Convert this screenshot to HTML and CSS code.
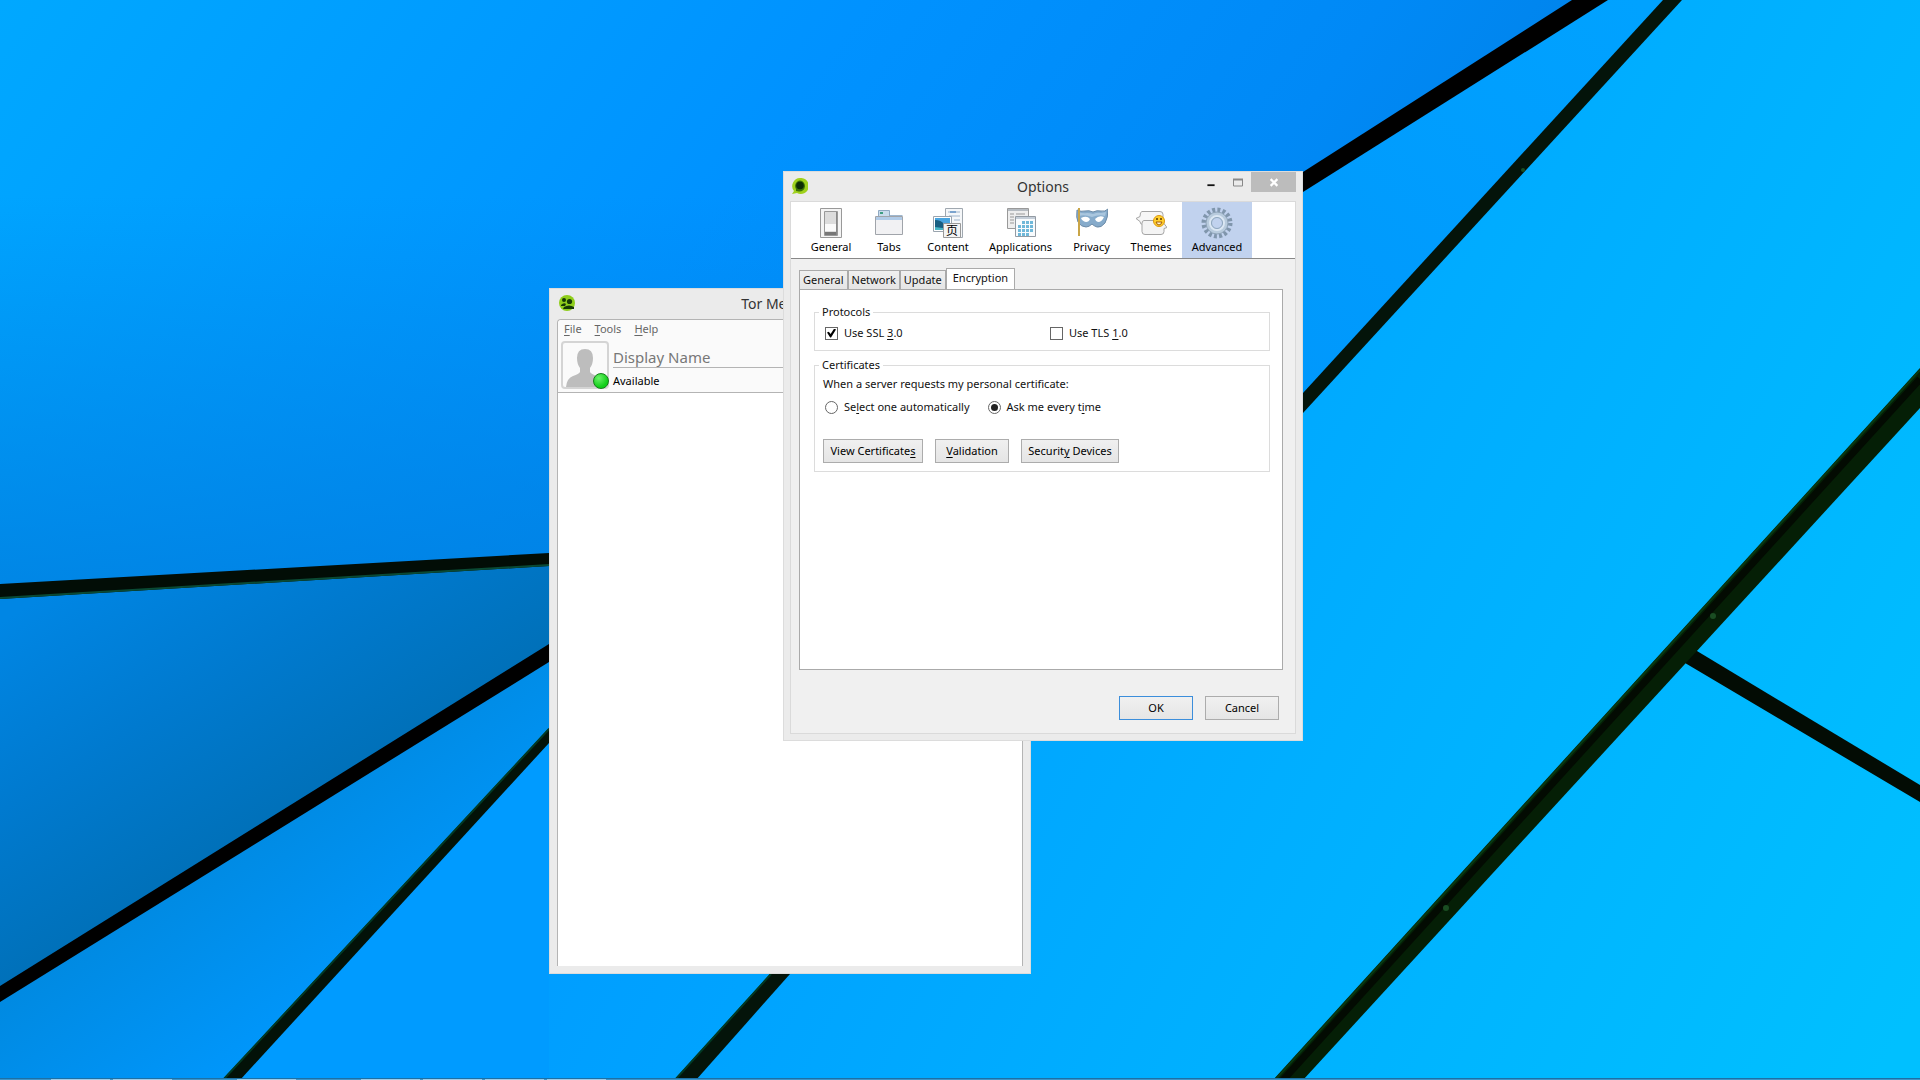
FILE: index.html
```html
<!DOCTYPE html>
<html lang="en">
<head>
<meta charset="utf-8">
<title>Desktop</title>
<link rel="stylesheet" href="styles.css">
</head>
<body class="desktop">
<svg class="wallpaper" viewBox="0 0 1920 1080" preserveAspectRatio="none" aria-hidden="true">
  <defs>
    <linearGradient id="sky" x1="0" y1="0" x2="1" y2="0.3">
      <stop offset="0" stop-color="#00a8ff"/><stop offset="0.5" stop-color="#0092ff"/><stop offset="0.8" stop-color="#0089f6"/><stop offset="1" stop-color="#0082e6"/>
    </linearGradient>
    <linearGradient id="skyshade" x1="0" y1="0" x2="0" y2="1">
      <stop offset="0.3" stop-color="#007edc" stop-opacity="0"/><stop offset="1" stop-color="#007edc" stop-opacity="0.85"/>
    </linearGradient>
    <linearGradient id="dusk" gradientUnits="userSpaceOnUse" x1="100" y1="560" x2="270" y2="830">
      <stop offset="0" stop-color="#0086e4"/><stop offset="0.5" stop-color="#007acf"/><stop offset="1" stop-color="#0070b8"/>
    </linearGradient>
    <linearGradient id="low" gradientUnits="userSpaceOnUse" x1="200" y1="860" x2="420" y2="1160">
      <stop offset="0" stop-color="#008ae2"/><stop offset="0.5" stop-color="#0096fa"/><stop offset="1" stop-color="#009eff"/>
    </linearGradient>
    <linearGradient id="right" gradientUnits="userSpaceOnUse" x1="600" y1="300" x2="1920" y2="1000">
      <stop offset="0" stop-color="#0096ff"/><stop offset="0.55" stop-color="#00aeff"/><stop offset="1" stop-color="#00c0ff"/>
    </linearGradient>
    <linearGradient id="wedge" gradientUnits="userSpaceOnUse" x1="1640" y1="0" x2="1300" y2="400">
      <stop offset="0" stop-color="#00a2ff"/><stop offset="1" stop-color="#0098fc"/>
    </linearGradient>
  </defs>
  <rect width="1920" height="1080" fill="url(#right)"/>
  <path d="M0 0H1590L549 652V558L0 591Z" fill="url(#sky)"/>
  <path d="M0 0H1590L549 652V558L0 591Z" fill="url(#skyshade)"/>
  <path d="M0 591L549 558V652L0 992Z" fill="url(#dusk)"/>
  <path d="M0 992L549 652V735L230 1080H0Z" fill="url(#low)"/>
  <path d="M549 735V1080H230Z" fill="#009bff"/>
  <path d="M1590 0H1674L1303 405L1180 430V250Z" fill="url(#wedge)"/>
  <path d="M0 584L549 553V566L0 599Z" fill="#020d06"/>
  <path d="M0 598L549 565" stroke="#0a4a34" stroke-width="2"/>
  <path d="M0 986L549 644V662L0 1002Z" fill="#000"/>
  <path d="M549 728V743L240 1080H222Z" fill="#031208"/>
  <path d="M549 729L223 1080" stroke="#023a24" stroke-width="2"/>
  <path d="M770 974H790L696 1080H674Z" fill="#04140a"/>
  <path d="M771 974L675 1080" stroke="#023a24" stroke-width="2"/>
  <path d="M1303 172L1572 0H1608L1303 192Z" fill="#000"/>
  <path d="M1303 393L1663 0H1682L1303 413Z" fill="#04140a"/>
  <path d="M1692 648L1920 785V802L1680 660Z" fill="#030c04"/>
  <path d="M1920 368V408L1303 1080H1273Z" fill="#051f06"/>
  <path d="M1920 379L1283 1080" stroke="#030b02" stroke-width="7"/>
  <path d="M1920 370L1275 1080" stroke="#083a12" stroke-width="2"/>
  <g fill="#1a4d22"><circle cx="1713" cy="616" r="3"/><circle cx="1446" cy="908" r="3"/><circle cx="1523" cy="170" r="2"/></g>
</svg>

<section class="window messenger" aria-label="Tor Messenger">
  <header class="titlebar">
    <svg class="app-icon" viewBox="0 0 16 16"><circle cx="8" cy="8" r="8" fill="#8fce1c"/><g fill="#173a05"><circle cx="5" cy="5" r="2"/><circle cx="10.500" cy="6.500" r="2.600"/><path d="M2 10q3-3 5-1l-1 2H2zM5 12q5-3 10 0v2H4z"/></g></svg>
    <h1 class="title">Tor Messenger</h1>
  </header>
  <div class="buddy-list">
    <nav class="menubar"><button><u>F</u>ile</button><button><u>T</u>ools</button><button><u>H</u>elp</button></nav>
    <div class="account">
      <div class="avatar">
        <svg viewBox="0 0 44 44"><path d="M14 15q0-9 8-9t8 9q0 6-3 10v4q1 2 7 4 5 2 6 11H3q1-9 7-11 6-2 7-4v-4q-3-4-3-10z" fill="#bdbdbd"/></svg>
        <span class="presence"></span>
      </div>
      <div class="identity"><p class="display-name">Display Name</p><p class="status">Available</p></div>
    </div>
    <div class="contacts"></div>
  </div>
</section>

<section class="window options" aria-label="Options">
  <header class="titlebar">
    <svg class="app-icon" viewBox="0 0 16 16"><path d="M8 0a8 8 0 1 1-3 15L0 16 2 13A8 8 0 0 1 8 0z" fill="#9fd11c"/><path d="M8 2.500a5.500 5.500 0 1 1-1 11L4 13V11A5.500 5.500 0 0 1 8 2.500z" fill="#3c7206"/><circle cx="8" cy="7.500" r="3.800" fill="#0e2d04"/></svg>
    <h1 class="title">Options</h1>
    <div class="window-controls">
      <button class="minimize" aria-label="Minimize"><svg viewBox="0 0 8 10"><path d="M0 8h8" stroke="#111" stroke-width="2"/></svg></button>
      <button class="maximize" aria-label="Maximize"><svg viewBox="0 0 10 8"><path d="M.5 1h9v6.500h-9z" fill="none" stroke="#888"/><path d="M0 1h10" stroke="#888" stroke-width="2"/></svg></button>
      <button class="close" aria-label="Close"><svg viewBox="0 0 8 8"><path d="M1 1l6 6M7 1L1 7" stroke="#fff" stroke-width="2"/></svg></button>
    </div>
  </header>
  <div class="dialog">
    <nav class="categories">
      <button class="category cat-general">
        <svg viewBox="0 0 32 32"><path d="M5.500 1.500h21v29h-21z" fill="#f4f4f4" stroke="#999"/><path d="M9.500 4.500h13v24h-13z" fill="#ddd" stroke="#999"/><path d="M10 5h10v12H10z" fill="#dcdcdc"/><path d="M10 17h11v7H10z" fill="#fafafa"/><path d="M10 25h12v3H10z" fill="#777"/><path d="M21 5h1v23h-1z" fill="#888"/></svg>General</button>
      <button class="category cat-tabs">
        <svg viewBox="0 0 32 32"><path d="M5.500 9.500v-6h11v6" fill="#c8dbec" stroke="#8fa9c2"/><path d="M7 6h3" stroke="#3f9d83" stroke-width="2"/><path d="M17 8.500h12.500" stroke="#9fb7ce"/><path d="M2.500 9.500h27v18h-27z" fill="#f1f1f3" stroke="#a0a4aa"/><path d="M3 10h26v3H3z" fill="#b0cbe8"/></svg>Tabs</button>
      <button class="category cat-content">
        <svg viewBox="0 0 32 32"><path d="M13.500 1.500h17v29h-17z" fill="#f5f7f9" stroke="#a0a8b0"/><path d="M16 5h12M17 9h11M22 13h6" stroke="#9fb4cc"/><path d="M18 5h6" stroke="#2e73b8"/><path d="M1.500 9.500h18v15h-18z" fill="#fff" stroke="#9aa4ae"/><path d="M3 11h15v12H3z" fill="#4aa5e0"/><path d="M3 13q6 0 9 4t6 3v3H3z" fill="#195f82"/><path d="M3 20l15 2v1H3z" fill="#46b5c5"/><path d="M11.500 16.500h17v14h-17z" fill="#f4f4f4" stroke="#999"/><text x="20" y="28" class="glyph">页</text></svg>Content</button>
      <button class="category cat-applications">
        <svg viewBox="0 0 32 32"><path d="M2.500 1.500h21v20h-21z" fill="#eee" stroke="#999"/><path d="M3 3h20" stroke="#b5bbc1" stroke-width="2"/><path d="M5 7h4M5 10h4M5 13h4M5 16h4M11 7h9M11 10h9" stroke="#999"/><path d="M10.500 9.500h20v20h-20z" fill="#f8fbfd" stroke="#939ba3"/><path d="M11 11h19" stroke="#c5ced8" stroke-width="2"/><path d="M17 15.500h11M13 19.500h15M13 23.500h15M13 27.500h11" stroke="#6fb8d9" stroke-width="3" stroke-dasharray="3 1"/></svg>Applications</button>
      <button class="category cat-privacy">
        <svg viewBox="0 0 32 32"><path d="M1 3q4 2 8 1 4-1 8 1 4-2 8-1 4 1 7-2 0 9-3 14-4 5-8 4-3-1-5-3-3 3-6 3-5 0-8-5Q0 11 1 3z" fill="#86abcb" stroke="#6c8ba8"/><path d="M2 5q6 2 9 1 3 0 6 1 5-2 8-1l5-1-1 4q-6-2-13 1Q8 7 3 9z" fill="#a9c6de"/><path d="M5 11q6-3 9 1-1 3-4 3-4-1-5-4zM19 12q4-4 9-2-2 5-6 5-2 0-3-3z" fill="#fff"/><path d="M3 1v28" stroke="#c9a547" stroke-width="2"/></svg>Privacy</button>
      <button class="category cat-themes">
        <svg viewBox="0 0 32 32"><path d="M7 4.500h18q3 0 3 3v8q0 2-3 2H8q-3 0-3-3l-4-3 4-2q0-5 2-5z" fill="#f6f6f6" stroke="#a5a5a5"/><path d="M9 13.500h18q2 0 2 3l3 4-3 1v3q0 3-3 3H10q-3 0-3-3v-8q0-3 2-3z" fill="#f4f4f4" stroke="#a5a5a5"/><circle cx="24" cy="14" r="5.500" fill="#ffd02e" stroke="#dd980f"/><circle cx="22" cy="12" r="1" fill="#5b3903"/><circle cx="26" cy="12" r="1" fill="#5b3903"/><path d="M21 15h6q-1 3-3 3t-3-3z" fill="#fff5d3" stroke="#a65c06"/></svg>Themes</button>
      <button class="category cat-advanced selected">
        <svg viewBox="0 0 32 32"><circle cx="16" cy="16" r="13" fill="none" stroke="#8096ac" stroke-width="5" stroke-dasharray="2.900 2.205"/><circle cx="16" cy="16" r="11" fill="#b8cbdd" stroke="#8fa4b9"/><circle cx="16" cy="16" r="7" fill="none" stroke="#dbe7f3" stroke-width="2"/><circle cx="16" cy="16" r="5.500" fill="#c1d2ee" stroke="#8fa7be"/></svg>Advanced</button>
    </nav>
    <div class="pane">
      <div class="tabs" role="tablist"><button role="tab">General</button><button role="tab">Network</button><button role="tab">Update</button><button role="tab" class="active" aria-selected="true">Encryption</button></div>
      <div class="tab-panel" role="tabpanel">
        <fieldset class="group">
          <legend>Protocols</legend>
          <div class="protocols">
            <label><input type="checkbox" checked><span>Use SSL <u>3</u>.0</span></label>
            <label><input type="checkbox"><span>Use TLS <u>1</u>.0</span></label>
          </div>
        </fieldset>
        <fieldset class="group">
          <legend>Certificates</legend>
          <p class="prompt">When a server requests my personal certificate:</p>
          <div class="choices">
            <label><input type="radio" name="cert"><span>Se<u>l</u>ect one automatically</span></label>
            <label><input type="radio" name="cert" checked><span>Ask me every t<u>i</u>me</span></label>
          </div>
          <div class="actions"><button class="btn view">View Certificate<u>s</u></button><button class="btn validation"><u>V</u>alidation</button><button class="btn devices">Securit<u>y</u> Devices</button></div>
        </fieldset>
      </div>
      <footer class="dialog-buttons"><button class="btn default">OK</button><button class="btn">Cancel</button></footer>
    </div>
  </div>
</section>

<div class="taskbar" aria-hidden="true"><i></i><i></i><i class="far"></i><i class="far"></i><i></i><i></i><i></i></div>
</body>
</html>
```
FILE: styles.css
```css
* { box-sizing: border-box; }

body, h1, p { margin: 0; }

button {
  margin: 0;
  padding: 0;
  border: 0;
  background: none;
  color: inherit;
  font: inherit;
}

u { text-underline-offset: 2px; }

.desktop {
  position: relative;
  min-height: 100vh;
  overflow: hidden;
  background: #00a4ff;
  color: #111;
  font: 11px/16px "Segoe UI", "Noto Sans", "Open Sans", sans-serif;
}

.wallpaper {
  position: absolute;
  inset: 0;
  width: 100%;
  height: 100%;
}

/* Windows */
.window {
  position: absolute;
  display: flex;
  flex-direction: column;
  border: 1px solid #dcdcdc;
  background: #ebebeb;
}

.messenger { left: 549px; top: 288px; width: 482px; height: 686px; padding: 0 7px 7px; }
.options { left: 783px; top: 171px; width: 520px; height: 570px; padding: 0 6px 6px; }

.titlebar {
  position: relative;
  display: flex;
  align-items: center;
  justify-content: center;
  height: 30px;
}

.options .titlebar { height: 29px; }

.title {
  color: #333;
  font-size: 14px;
  font-weight: 400;
  line-height: 20px;
}

.app-icon {
  position: absolute;
  left: 2px;
  top: 6px;
  width: 16px;
  height: 16px;
}

.window-controls {
  position: absolute;
  right: 0;
  top: 0;
  display: flex;
}

.window-controls button {
  display: grid;
  place-items: center;
  width: 27px;
  height: 20px;
}

.window-controls .close { width: 45px; background: #bcbcbc; }
.window-controls svg { width: 10px; height: 9px; }

/* Messenger */
.buddy-list {
  display: flex;
  flex: 1;
  flex-direction: column;
  border: 1px solid #b4b4b4;
  border-bottom: 0;
  border-radius: 4px 4px 0 0;
  background: #fff;
}

.menubar {
  display: flex;
  gap: 13px;
  padding: 1px 6px;
  border-radius: 4px 4px 0 0;
  background: #fafafa;
  color: #666;
}

.account {
  display: flex;
  gap: 4px;
  padding: 3px 0 3px 3px;
  border-bottom: 1px solid #b4b4b4;
  background: #fafafa;
}

.avatar {
  position: relative;
  width: 48px;
  height: 48px;
  border: 2px solid #d4d4d4;
  border-radius: 4px;
}

.avatar svg { display: block; width: 44px; height: 44px; }

.presence {
  position: absolute;
  right: -2px;
  bottom: -2px;
  width: 16px;
  height: 16px;
  border: 1px solid #15801a;
  border-radius: 50%;
  background: radial-gradient(circle at 35% 30%, #6df26a, #12cf1a 65%);
}

.identity { flex: 1; }

.display-name {
  padding-top: 6px;
  border-bottom: 1px solid #b4b4b4;
  color: #777;
  font-size: 15px;
  line-height: 20px;
}

.status { padding-top: 5px; color: #000; }
.contacts { flex: 1; }

/* Options dialog */
.dialog {
  display: flex;
  flex: 1;
  flex-direction: column;
  border: 1px solid #dadada;
  background: #f0f0f0;
}

.categories {
  display: flex;
  height: 57px;
  padding-left: 11px;
  border-bottom: 1px solid #888;
  background: #fff;
}

.category {
  display: flex;
  flex-direction: column;
  align-items: center;
  padding-top: 5px;
  color: #000;
}

.category svg { width: 32px; height: 32px; }
.cat-general, .cat-tabs { width: 58px; }
.cat-privacy { width: 57px; }
.cat-content { width: 60px; }
.cat-themes { width: 62px; }
.cat-applications { width: 85px; }
.cat-advanced { width: 70px; }
.selected { background: #c1d2ee; }

.glyph {
  font: 12px "Noto Sans CJK SC", sans-serif;
  text-anchor: middle;
}

.pane {
  display: flex;
  flex: 1;
  flex-direction: column;
  padding: 9px 12px 13px 8px;
}

.tabs {
  display: flex;
  align-items: flex-end;
  height: 21px;
}

.tabs button {
  height: 19px;
  padding: 0 3px;
  border: 1px solid #aaa;
  border-bottom: 0;
  background: linear-gradient(#f0f0f0, #e5e5e5);
}

.tabs .active {
  height: 21px;
  padding: 0 6px 3px;
  background: #fff;
}

.tab-panel {
  flex: 1;
  padding: 14px 12px 14px 14px;
  border: 1px solid #aaa;
  background: #fff;
}

.group {
  min-width: 0;
  margin: 0 0 6px;
  padding: 0 8px;
  border: 1px solid #dcdcdc;
}

.group legend { padding: 0 3px; margin-left: -4px; }

.protocols { display: grid; grid-template-columns: 225px 1fr; padding: 5px 2px 9px; }
.choices { display: flex; gap: 18px; padding: 7px 2px 24px; }

label { display: flex; align-items: center; gap: 6px; }

input {
  display: grid;
  place-items: center;
  appearance: none;
  width: 13px;
  height: 13px;
  margin: 0;
  border: 1px solid #666;
  background: #fff;
}

input[type="radio"] { border-radius: 50%; }

input[type="radio"]:checked::before {
  width: 7px;
  height: 7px;
  border-radius: 50%;
  background: #222;
  content: "";
}

input[type="checkbox"]:checked::before {
  width: 9px;
  height: 9px;
  background: #000;
  clip-path: polygon(0 45%, 20% 35%, 40% 60%, 80% 0, 100% 10%, 45% 100%, 35% 100%);
  content: "";
}

.prompt { padding-top: 3px; }
.actions { display: flex; gap: 12px; padding-bottom: 8px; }

.btn {
  height: 24px;
  border: 1px solid #acacac;
  background: linear-gradient(#f0f0f0, #e5e5e5);
  color: #000;
}

.view { width: 100px; }
.validation { width: 74px; }
.devices { width: 98px; }

.dialog-buttons {
  display: flex;
  justify-content: flex-end;
  gap: 12px;
  padding: 26px 4px 0 0;
}

.dialog-buttons .btn { width: 74px; }
.dialog-buttons .default { border-color: #3c8edb; }

/* Top edge of the taskbar */
.taskbar {
  position: absolute;
  right: 0;
  bottom: 0;
  left: 0;
  display: flex;
  gap: 3px;
  height: 2px;
  padding-left: 51px;
  border-top: 1px solid #1d70a5;
  background: #3c94c8;
}

.taskbar i { width: 59px; background: #9ccbe8; }
.taskbar .far { margin-left: 62px; }
```
